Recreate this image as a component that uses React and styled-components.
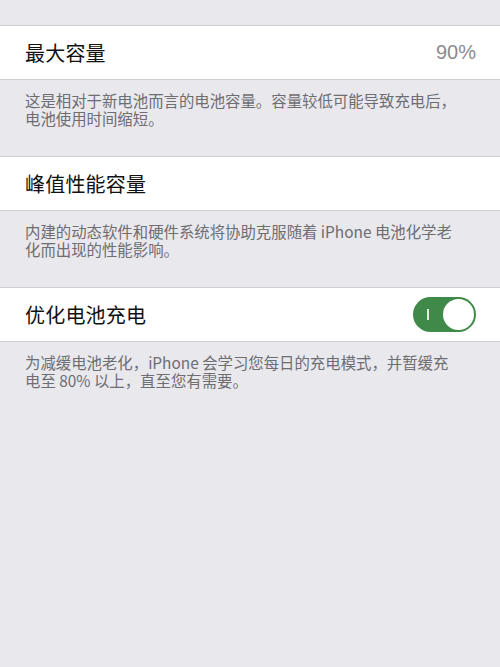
import React from "react";
import styled, { createGlobalStyle } from "styled-components";

const Global = createGlobalStyle`
  html, body {
    margin: 0;
    padding: 0;
    background: #e9e8ed;
  }
  body {
    font-family: "Noto Sans CJK SC", "Noto Sans", sans-serif;
    -webkit-font-smoothing: antialiased;
  }
`;

const Page = styled.div`
  min-height: 667px;
  background: #e9e8ed;
  padding-top: 25px;
  box-sizing: border-box;
`;

const Section = styled.section`
  display: flex;
  flex-direction: column;
`;

const Row = styled.div`
  height: 53px;
  background: #ffffff;
  border-top: 1px solid #cfced3;
  border-bottom: 1px solid #cfced3;
  display: flex;
  align-items: center;
  justify-content: space-between;
  padding: 0 24px 0 25px;
`;

const Title = styled.span`
  font-size: 20px;
  color: #111111;
  letter-spacing: 0.2px;
`;

const Value = styled.span`
  font-family: "Liberation Sans", "Noto Sans", sans-serif;
  font-size: 20px;
  color: #8a8a8e;
`;

const Footer = styled.p`
  margin: 0;
  padding: 11px 38px 29px 25px;
  font-size: 15.4px;
  line-height: 18px;
  color: #6d6d72;
`;

const Switch = styled.div`
  position: relative;
  width: 63px;
  height: 35px;
  border-radius: 18px;
  background: #3f8a48;
  flex-shrink: 0;
`;

const OnMark = styled.span`
  position: absolute;
  left: 14px;
  top: 12px;
  width: 1.5px;
  height: 11px;
  background: #dfeee0;
`;

const Knob = styled.span`
  position: absolute;
  right: 2px;
  top: 2px;
  width: 31px;
  height: 31px;
  border-radius: 50%;
  background: #ffffff;
`;

export default function App() {
  return (
    <Page>
      <Global />
      <Section>
        <Row>
          <Title>最大容量</Title>
          <Value>90%</Value>
        </Row>
        <Footer>
          这是相对于新电池而言的电池容量。容量较低可能导致充电后，电池使用时间缩短。
        </Footer>
      </Section>
      <Section>
        <Row>
          <Title>峰值性能容量</Title>
        </Row>
        <Footer>
          内建的动态软件和硬件系统将协助克服随着 iPhone 电池化学老化而出现的性能影响。
        </Footer>
      </Section>
      <Section>
        <Row>
          <Title>优化电池充电</Title>
          <Switch>
            <OnMark />
            <Knob />
          </Switch>
        </Row>
        <Footer>
          为减缓电池老化，iPhone 会学习您每日的充电模式，并暂缓充电至 80% 以上，直至您有需要。
        </Footer>
      </Section>
    </Page>
  );
}
